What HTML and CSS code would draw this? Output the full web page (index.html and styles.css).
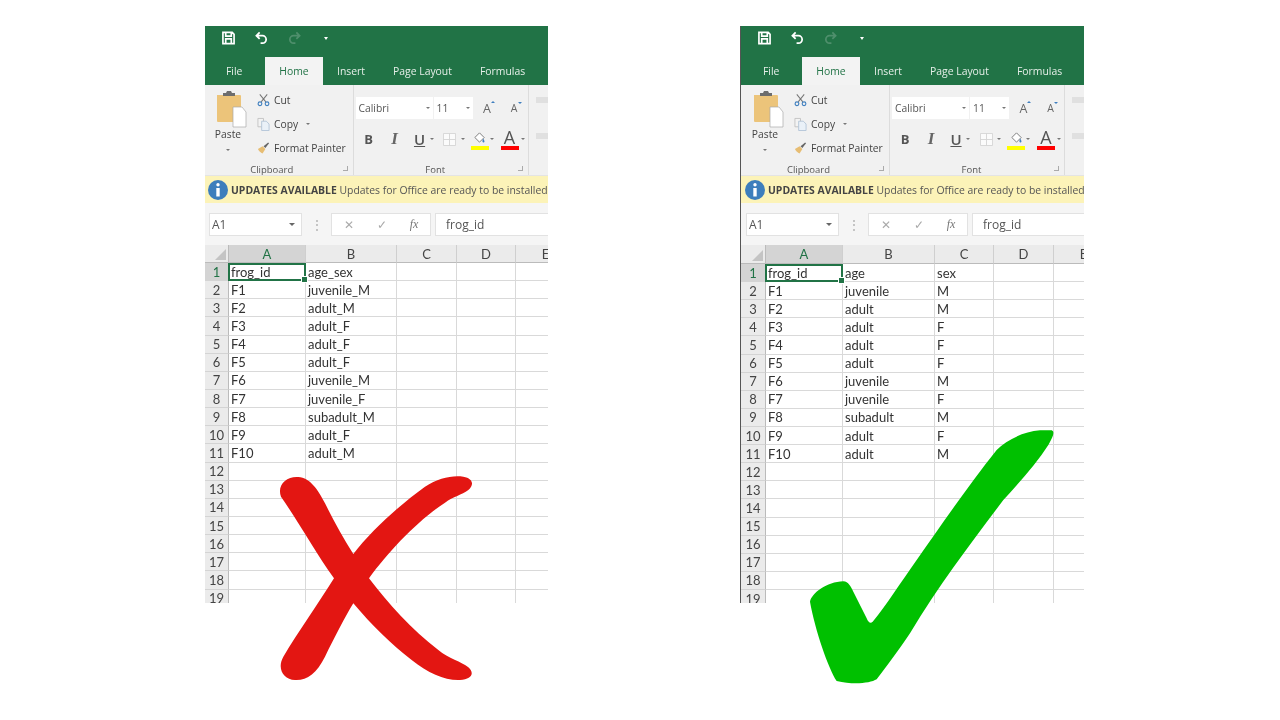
FILE: index.html
```html
<!DOCTYPE html>
<html lang="en">
<head>
  <meta charset="UTF-8" />
  <title>Tidy data in Excel</title>
  <link rel="stylesheet" href="styles.css">
</head>
<body>

  <svg class="defs" width="0" height="0">
    <symbol id="i-save" viewBox="0 0 14 14"><path d="M1 1h10l2 2v10H1z M4 1v4h6V1 M4 13V8h6v5" fill="none" stroke="#fff" stroke-width="1.8"/></symbol>
    <symbol id="i-undo" viewBox="0 0 14 14"><path d="M5 1L1.5 4.5 5 8 M2 4.5h6a4 4 0 0 1 0 8H6" fill="none" stroke="currentColor" stroke-width="1.9"/></symbol>
    <symbol id="i-paste" viewBox="0 0 32 38"><path d="M2 5h23a1 1 0 0 1 1 1v26H3a1 1 0 0 1-1-1z" fill="#ecc47a"/><path d="M8 6V3h3l1-2h4l1 2h3v3z" fill="#6d6d6d"/><path d="M18 17h9l4 5v15H18z" fill="#fff" stroke="#aaa" stroke-width=".7"/></symbol>
    <symbol id="i-cut" viewBox="0 0 14 14"><path d="M3 1l6.5 8 M11 1L4.5 9" fill="none" stroke="#777" stroke-width="1.1"/><circle cx="3.2" cy="11" r="2" fill="none" stroke="#3f7fbf" stroke-width="1.2"/><circle cx="10.8" cy="11" r="2" fill="none" stroke="#3f7fbf" stroke-width="1.2"/></symbol>
    <symbol id="i-copy" viewBox="0 0 14 14"><path d="M1 1h6v9H1z" fill="#f3f3f3" stroke="#c2c2c2"/><path d="M5 4h5l3 3v7H5z" fill="#eaf1f8" stroke="#b4c6d8"/></symbol>
    <symbol id="i-brush" viewBox="0 0 14 14"><path d="M1 8l5-3 3 3-3 5C4 12 2 10 1 8z" fill="#e7bd73"/><path d="M7 5l5-4 1 1-4 5z" fill="#666"/></symbol>
    <symbol id="i-borders" viewBox="0 0 14 14"><path d="M.5.5h13v13H.5z M7 .5v13 M.5 7h13" fill="#fbfbfb" stroke="#d5d5d5"/></symbol>
    <symbol id="i-fill" viewBox="0 0 14 14"><path d="M2 7l5-5 5 5-5 5z" fill="#fff" stroke="#777"/><path d="M11 8c1 2 2 3 1 4s-3 0-1-4z" fill="#3f7fbf"/></symbol>
    <symbol id="i-info" viewBox="0 0 20 20"><circle cx="10" cy="10" r="10" fill="#3d7ebc"/><circle cx="10" cy="4.8" r="1.7" fill="#fff"/><path d="M8.3 8h3.4v8.5H8.3z" fill="#fff"/></symbol>
  </svg>

  <main class="slide">

    <!-- Untidy version: one column for age and sex -->
    <section class="sheet sheet-left">
      <div class="qat">
        <svg class="qat-icon"><use href="#i-save"/></svg>
        <svg class="qat-icon undo"><use href="#i-undo"/></svg>
        <svg class="qat-icon redo"><use href="#i-undo"/></svg>
        <span class="qat-more"></span>
      </div>
      <nav class="tabs">
        <span class="tab tab-file">File</span>
        <span class="tab tab-home">Home</span>
        <span class="tab tab-insert">Insert</span>
        <span class="tab tab-layout">Page Layout</span>
        <span class="tab">Formulas</span>
      </nav>
      <div class="ribbon">
        <div class="group group-clip">
          <div class="group-body clip-body">
            <div class="paste">
              <svg class="paste-icon"><use href="#i-paste"/></svg>
              <span>Paste</span>
              <span class="tiny-caret"></span>
            </div>
            <div class="clip-tools">
              <div class="clip-row"><svg class="tool-icon"><use href="#i-cut"/></svg>Cut</div>
              <div class="clip-row"><svg class="tool-icon"><use href="#i-copy"/></svg>Copy<span class="tiny-caret caret-copy"></span></div>
              <div class="clip-row"><svg class="tool-icon"><use href="#i-brush"/></svg>Format Painter</div>
            </div>
          </div>
          <div class="group-label label-clip">Clipboard</div>
        </div>
        <div class="group group-font">
          <div class="group-body font-body">
            <div class="font-row">
              <span class="combo combo-name">Calibri<i class="tiny-caret"></i></span>
              <span class="combo combo-size">11<i class="tiny-caret"></i></span>
              <span class="grow-a">A</span>
              <span class="grow-a shrink-a">A</span>
            </div>
            <div class="format-row">
              <span class="fmt fmt-b">B</span>
              <span class="fmt fmt-i">I</span>
              <span class="fmt fmt-u drop">U</span>
              <span class="fmt fmt-wide drop"><svg class="fmt-icon"><use href="#i-borders"/></svg></span>
              <span class="fmt fmt-fill drop"><svg class="fmt-icon"><use href="#i-fill"/></svg></span>
              <span class="fmt fmt-wide fmt-color drop">A</span>
            </div>
          </div>
          <div class="group-label label-font">Font</div>
        </div>
        <div class="group-next"><span></span><span></span></div>
      </div>
      <div class="notice">
        <svg class="info"><use href="#i-info"/></svg>
        <span class="notice-text"><b>UPDATES AVAILABLE</b> Updates for Office are ready to be installed</span>
      </div>
      <div class="formula">
        <span class="name-box">A1<i class="tiny-caret"></i></span>
        <span class="dots">⋮</span>
        <span class="fx-box"><em>✕</em><em>✓</em><em class="fx">fx</em></span>
        <span class="formula-input">frog_id</span>
      </div>
      <div class="grid">
        <div class="corner"></div><div class="col col-on">A</div><div class="col">B</div><div class="col">C</div><div class="col">D</div><div class="col">E</div>
        <div class="row row-on">1</div><div class="cell cell-on">frog_id</div><div class="cell">age_sex</div><div class="cell"></div><div class="cell"></div><div class="cell"></div>
        <div class="row">2</div><div class="cell">F1</div><div class="cell">juvenile_M</div><div class="cell"></div><div class="cell"></div><div class="cell"></div>
        <div class="row">3</div><div class="cell">F2</div><div class="cell">adult_M</div><div class="cell"></div><div class="cell"></div><div class="cell"></div>
        <div class="row">4</div><div class="cell">F3</div><div class="cell">adult_F</div><div class="cell"></div><div class="cell"></div><div class="cell"></div>
        <div class="row">5</div><div class="cell">F4</div><div class="cell">adult_F</div><div class="cell"></div><div class="cell"></div><div class="cell"></div>
        <div class="row">6</div><div class="cell">F5</div><div class="cell">adult_F</div><div class="cell"></div><div class="cell"></div><div class="cell"></div>
        <div class="row">7</div><div class="cell">F6</div><div class="cell">juvenile_M</div><div class="cell"></div><div class="cell"></div><div class="cell"></div>
        <div class="row">8</div><div class="cell">F7</div><div class="cell">juvenile_F</div><div class="cell"></div><div class="cell"></div><div class="cell"></div>
        <div class="row">9</div><div class="cell">F8</div><div class="cell">subadult_M</div><div class="cell"></div><div class="cell"></div><div class="cell"></div>
        <div class="row">10</div><div class="cell">F9</div><div class="cell">adult_F</div><div class="cell"></div><div class="cell"></div><div class="cell"></div>
        <div class="row">11</div><div class="cell">F10</div><div class="cell">adult_M</div><div class="cell"></div><div class="cell"></div><div class="cell"></div>
        <div class="row">12</div><div class="cell"></div><div class="cell"></div><div class="cell"></div><div class="cell"></div><div class="cell"></div>
        <div class="row">13</div><div class="cell"></div><div class="cell"></div><div class="cell"></div><div class="cell"></div><div class="cell"></div>
        <div class="row">14</div><div class="cell"></div><div class="cell"></div><div class="cell"></div><div class="cell"></div><div class="cell"></div>
        <div class="row">15</div><div class="cell"></div><div class="cell"></div><div class="cell"></div><div class="cell"></div><div class="cell"></div>
        <div class="row">16</div><div class="cell"></div><div class="cell"></div><div class="cell"></div><div class="cell"></div><div class="cell"></div>
        <div class="row">17</div><div class="cell"></div><div class="cell"></div><div class="cell"></div><div class="cell"></div><div class="cell"></div>
        <div class="row">18</div><div class="cell"></div><div class="cell"></div><div class="cell"></div><div class="cell"></div><div class="cell"></div>
        <div class="row">19</div><div class="cell"></div><div class="cell"></div><div class="cell"></div><div class="cell"></div><div class="cell"></div>
      </div>
    </section>

    <!-- Tidy version: age and sex split -->
    <section class="sheet sheet-right">
      <div class="qat">
        <svg class="qat-icon"><use href="#i-save"/></svg>
        <svg class="qat-icon undo"><use href="#i-undo"/></svg>
        <svg class="qat-icon redo"><use href="#i-undo"/></svg>
        <span class="qat-more"></span>
      </div>
      <nav class="tabs">
        <span class="tab tab-file">File</span>
        <span class="tab tab-home">Home</span>
        <span class="tab tab-insert">Insert</span>
        <span class="tab tab-layout">Page Layout</span>
        <span class="tab">Formulas</span>
      </nav>
      <div class="ribbon">
        <div class="group group-clip">
          <div class="group-body clip-body">
            <div class="paste">
              <svg class="paste-icon"><use href="#i-paste"/></svg>
              <span>Paste</span>
              <span class="tiny-caret"></span>
            </div>
            <div class="clip-tools">
              <div class="clip-row"><svg class="tool-icon"><use href="#i-cut"/></svg>Cut</div>
              <div class="clip-row"><svg class="tool-icon"><use href="#i-copy"/></svg>Copy<span class="tiny-caret caret-copy"></span></div>
              <div class="clip-row"><svg class="tool-icon"><use href="#i-brush"/></svg>Format Painter</div>
            </div>
          </div>
          <div class="group-label label-clip">Clipboard</div>
        </div>
        <div class="group group-font">
          <div class="group-body font-body">
            <div class="font-row">
              <span class="combo combo-name">Calibri<i class="tiny-caret"></i></span>
              <span class="combo combo-size">11<i class="tiny-caret"></i></span>
              <span class="grow-a">A</span>
              <span class="grow-a shrink-a">A</span>
            </div>
            <div class="format-row">
              <span class="fmt fmt-b">B</span>
              <span class="fmt fmt-i">I</span>
              <span class="fmt fmt-u drop">U</span>
              <span class="fmt fmt-wide drop"><svg class="fmt-icon"><use href="#i-borders"/></svg></span>
              <span class="fmt fmt-fill drop"><svg class="fmt-icon"><use href="#i-fill"/></svg></span>
              <span class="fmt fmt-wide fmt-color drop">A</span>
            </div>
          </div>
          <div class="group-label label-font">Font</div>
        </div>
        <div class="group-next"><span></span><span></span></div>
      </div>
      <div class="notice">
        <svg class="info"><use href="#i-info"/></svg>
        <span class="notice-text"><b>UPDATES AVAILABLE</b> Updates for Office are ready to be installed</span>
      </div>
      <div class="formula">
        <span class="name-box">A1<i class="tiny-caret"></i></span>
        <span class="dots">⋮</span>
        <span class="fx-box"><em>✕</em><em>✓</em><em class="fx">fx</em></span>
        <span class="formula-input">frog_id</span>
      </div>
      <div class="grid">
        <div class="corner"></div><div class="col col-on">A</div><div class="col">B</div><div class="col">C</div><div class="col">D</div><div class="col">E</div>
        <div class="row row-on">1</div><div class="cell cell-on">frog_id</div><div class="cell">age</div><div class="cell">sex</div><div class="cell"></div><div class="cell"></div>
        <div class="row">2</div><div class="cell">F1</div><div class="cell">juvenile</div><div class="cell">M</div><div class="cell"></div><div class="cell"></div>
        <div class="row">3</div><div class="cell">F2</div><div class="cell">adult</div><div class="cell">M</div><div class="cell"></div><div class="cell"></div>
        <div class="row">4</div><div class="cell">F3</div><div class="cell">adult</div><div class="cell">F</div><div class="cell"></div><div class="cell"></div>
        <div class="row">5</div><div class="cell">F4</div><div class="cell">adult</div><div class="cell">F</div><div class="cell"></div><div class="cell"></div>
        <div class="row">6</div><div class="cell">F5</div><div class="cell">adult</div><div class="cell">F</div><div class="cell"></div><div class="cell"></div>
        <div class="row">7</div><div class="cell">F6</div><div class="cell">juvenile</div><div class="cell">M</div><div class="cell"></div><div class="cell"></div>
        <div class="row">8</div><div class="cell">F7</div><div class="cell">juvenile</div><div class="cell">F</div><div class="cell"></div><div class="cell"></div>
        <div class="row">9</div><div class="cell">F8</div><div class="cell">subadult</div><div class="cell">M</div><div class="cell"></div><div class="cell"></div>
        <div class="row">10</div><div class="cell">F9</div><div class="cell">adult</div><div class="cell">F</div><div class="cell"></div><div class="cell"></div>
        <div class="row">11</div><div class="cell">F10</div><div class="cell">adult</div><div class="cell">M</div><div class="cell"></div><div class="cell"></div>
        <div class="row">12</div><div class="cell"></div><div class="cell"></div><div class="cell"></div><div class="cell"></div><div class="cell"></div>
        <div class="row">13</div><div class="cell"></div><div class="cell"></div><div class="cell"></div><div class="cell"></div><div class="cell"></div>
        <div class="row">14</div><div class="cell"></div><div class="cell"></div><div class="cell"></div><div class="cell"></div><div class="cell"></div>
        <div class="row">15</div><div class="cell"></div><div class="cell"></div><div class="cell"></div><div class="cell"></div><div class="cell"></div>
        <div class="row">16</div><div class="cell"></div><div class="cell"></div><div class="cell"></div><div class="cell"></div><div class="cell"></div>
        <div class="row">17</div><div class="cell"></div><div class="cell"></div><div class="cell"></div><div class="cell"></div><div class="cell"></div>
        <div class="row">18</div><div class="cell"></div><div class="cell"></div><div class="cell"></div><div class="cell"></div><div class="cell"></div>
        <div class="row">19</div><div class="cell"></div><div class="cell"></div><div class="cell"></div><div class="cell"></div><div class="cell"></div>
      </div>
    </section>

    <!-- Hand drawn marks over the sheets -->
    <svg class="mark mark-cross" viewBox="0 0 1035 780">
      <path fill="#e31612" d="M228 170C215 135 245 108 280 111C315 113 340 150 360 190C385 240 415 295 445 342C500 270 590 190 660 140C700 115 740 105 775 110C805 115 808 135 790 150C770 165 745 170 720 188C640 240 550 335 492 415C550 490 620 570 700 630C730 655 770 665 790 682C810 700 800 718 765 720C720 722 670 700 620 660C560 615 500 555 445 490C420 530 390 590 360 650C335 700 305 722 270 720C235 718 215 685 235 650C280 575 340 490 387 415C330 335 280 245 228 170Z"/>
    </svg>
    <svg class="mark mark-check" viewBox="0 0 1035 825">
      <path fill="#00c000" d="M210 545C215 520 260 485 310 484C325 485 333 500 340 515L380 595C385 608 392 612 398 605C440 555 480 490 530 420C600 320 690 190 770 90C800 60 850 35 900 31L935 31C945 35 940 50 925 75C890 130 840 185 790 240C700 360 600 490 510 640C480 685 440 740 410 778C390 790 340 795 290 783C265 745 225 630 210 545Z"/>
    </svg>
  </main>

</body>
</html>
```

FILE: styles.css
```css
* {
  box-sizing: border-box;
}

body {
  margin: 0;
  background-color: #fff;
  font-family: "Open Sans", "Noto Sans", sans-serif;
  color: #444;
}

.defs {
  display: block;
  height: 0;
}

.slide {
  position: relative;
  display: flex;
  gap: 192px;
  width: 1280px;
  height: 720px;
  padding: 26px 0 0 205px;
  overflow: hidden;
}

.sheet {
  display: flex;
  flex-direction: column;
  width: 343px;
  height: 577px;
  overflow: hidden;
  background-color: #f3f3f3;
  filter: blur(0.3px);
}

.sheet > * {
  flex: none;
}

.sheet-right {
  width: 344px;
  border-left: 1px solid #555;
}

.sheet-right .tabs,
.sheet-right .ribbon,
.sheet-right .notice,
.sheet-right .formula {
  padding-left: 1px;
}

/* title bar */
.qat {
  display: flex;
  align-items: center;
  height: 31px;
  padding: 0 0 7px 17px;
  gap: 20px;
  background-color: #217346;
  color: #fff;
}

.qat-icon {
  width: 13px;
  height: 14px;
}

.redo {
  color: #4f8f6c;
  transform: scaleX(-1);
}

.qat-more {
  width: 0;
  height: 0;
  margin-left: 3px;
  border: 2px solid transparent;
  border-top: 3px solid #fff;
  border-bottom: 0;
}

.tabs {
  display: flex;
  align-items: center;
  height: 28px;
  background-color: #217346;
  color: #e6efe9;
  font-size: 10.4px;
}

.tab-file {
  width: 60px;
  padding-left: 21px;
}

.tab-home {
  align-self: stretch;
  display: flex;
  align-items: center;
  justify-content: center;
  width: 58px;
  background-color: #f3f3f3;
  color: #217346;
}

.tab-insert {
  margin-left: 14px;
  margin-right: 28px;
}

.tab-layout {
  margin-right: 28px;
}

/* ribbon */
.ribbon {
  display: flex;
  height: 91px;
  border-bottom: 1px solid #e4e4e4;
  background-color: #f1f1f1;
  font-size: 10.3px;
}

.group {
  display: flex;
  flex-direction: column;
  border-right: 1px solid #dcdcdc;
}

.group-clip {
  width: 149px;
}

.group-font {
  width: 176px;
}

.group-body {
  flex: 1;
}

.group-label {
  position: relative;
  height: 16px;
  text-align: center;
  font-size: 9.5px;
  line-height: 21px;
  color: #555;
}

/* little dialog launcher in the group corner */
.group-label::after {
  content: "";
  position: absolute;
  right: 5px;
  top: 7px;
  width: 4px;
  height: 4px;
  border-right: 1px solid #aaa;
  border-bottom: 1px solid #aaa;
}

.label-clip {
  padding-right: 14px;
}

.label-font {
  padding-right: 11px;
}

.clip-body {
  display: flex;
}

.paste {
  display: flex;
  flex-direction: column;
  align-items: center;
  width: 46px;
  padding-top: 5px;
  color: #444;
}

.paste-icon {
  width: 32px;
  height: 38px;
  margin: 0 0 -1px 6px;
}

.tiny-caret {
  display: inline-block;
  width: 0;
  height: 0;
  border: 2px solid transparent;
  border-top: 2px solid #777;
  border-bottom: 0;
}

.paste .tiny-caret {
  margin-top: 8px;
}

.clip-tools {
  display: flex;
  flex-direction: column;
  gap: 6px;
  padding: 6px 0 0 6px;
}

.clip-row {
  display: flex;
  align-items: center;
  gap: 4px;
  height: 18px;
  white-space: nowrap;
}

.tool-icon {
  width: 13px;
  height: 14px;
}

.caret-copy {
  margin-left: 4px;
}

.font-body {
  padding: 12px 0 0 2px;
}

.font-row {
  display: flex;
  align-items: center;
  height: 22px;
}

.combo {
  display: flex;
  align-items: center;
  justify-content: space-between;
  height: 22px;
  padding: 0 3px;
  background-color: #fff;
  color: #555;
}

.combo-name {
  width: 77px;
  margin-right: 1px;
}

.combo-size {
  width: 39px;
  margin-right: 1px;
}

.grow-a {
  position: relative;
  width: 27px;
  text-align: center;
  font-size: 12.5px;
  color: #666;
}

.grow-a::after {
  content: "";
  position: absolute;
  right: 6px;
  top: 1px;
  border: 2px solid transparent;
  border-bottom: 2px solid #3f7fbf;
  border-top: 0;
}

.shrink-a {
  font-size: 10.5px;
}

.shrink-a::after {
  border: 2px solid transparent;
  border-top: 2px solid #3f7fbf;
  border-bottom: 0;
}

.format-row {
  display: flex;
  align-items: center;
  height: 22px;
  margin-top: 9px;
  color: #555;
}

.fmt {
  position: relative;
  display: flex;
  align-items: center;
  justify-content: center;
  width: 26px;
  height: 22px;
}

/* dropdown dot after the format buttons */
.drop::after {
  content: "";
  position: absolute;
  right: -2px;
  top: 10px;
  border: 2px solid transparent;
  border-top: 2px solid #777;
  border-bottom: 0;
}

.fmt-b {
  font-size: 13px;
  font-weight: 700;
}

.fmt-i {
  font-family: "Liberation Serif", serif;
  font-size: 17px;
  font-style: italic;
  font-weight: 700;
  color: #666;
}

.fmt-u {
  width: 24px;
  font-size: 15px;
  font-weight: 600;
  text-decoration: underline;
}

.fmt-wide {
  width: 36px;
}

.fmt-wide.drop::after {
  right: 3px;
}

.fmt-fill {
  width: 18px;
  margin: 0 3px;
  border-bottom: 4px solid #ffff00;
}

.fmt-fill.drop::after {
  right: -5px;
}

.fmt-color {
  width: 18px;
  height: 22px;
  margin: 0 9px;
  border-bottom: 4px solid #ff0000;
  font-size: 18px;
  line-height: 16px;
}

.fmt-color.drop::after {
  right: -6px;
}

.fmt-icon {
  width: 13px;
  height: 13px;
}

.group-next {
  display: flex;
  flex-direction: column;
  gap: 30px;
  padding: 12px 0 0 7px;
}

.group-next span {
  width: 12px;
  height: 6px;
  background-color: #e0e0e0;
}

/* yellow notice */
.notice {
  display: flex;
  align-items: center;
  gap: 3px;
  height: 27px;
  background-color: #fcf3b8;
  font-size: 10.4px;
  white-space: nowrap;
  color: #555;
}

.info {
  flex: none;
  width: 20px;
  height: 20px;
  margin-left: 3px;
}

.notice b {
  color: #444;
}

/* formula bar */
.formula {
  display: flex;
  align-items: center;
  height: 42px;
  background-color: #f5f5f5;
  font-size: 12px;
  color: #555;
}

.name-box {
  display: flex;
  align-items: center;
  justify-content: space-between;
  flex: none;
  width: 93px;
  height: 23px;
  margin-left: 4px;
  padding: 0 6px 0 2px;
  border: 1px solid #e2e2e2;
  background-color: #fff;
}

.name-box .tiny-caret {
  border-width: 3px;
  border-top-color: #666;
}

.dots {
  flex: none;
  width: 29px;
  text-align: center;
  color: #aaa;
}

.fx-box {
  display: flex;
  justify-content: space-around;
  align-items: center;
  flex: none;
  width: 100px;
  height: 23px;
  margin-right: 4px;
  border: 1px solid #e2e2e2;
  background-color: #fff;
}

.fx-box em {
  font-style: normal;
  color: #aaa;
}

.fx-box .fx {
  font-family: "Liberation Serif", serif;
  font-style: italic;
  color: #777;
}

.formula-input {
  flex: 1;
  height: 23px;
  padding-left: 10px;
  border: 1px solid #e2e2e2;
  border-right: 0;
  background-color: #fff;
  line-height: 21px;
  white-space: nowrap;
}

/* spreadsheet */
.grid {
  display: grid;
  height: 358px;
  align-content: start;
  background-color: #fff;
  font-family: Lato, "Open Sans", sans-serif;
  font-size: 13px;
  color: #333;
}

.sheet-left .grid {
  grid-template-columns: 24px 77px 91px 60px 59px 60px;
  grid-template-rows: 18px repeat(19, 18.15px);
}

.sheet-right .grid {
  grid-template-columns: 25px 77px 92px 59px 60px 60px;
  grid-template-rows: 19px repeat(19, 18.12px);
}

.corner,
.col,
.row {
  background-color: #ebebeb;
  color: #444;
}

.corner {
  position: relative;
  border-right: 1px solid #bbb;
  border-bottom: 1px solid #bbb;
}

.corner::after {
  content: "";
  position: absolute;
  right: 2px;
  bottom: 2px;
  border-style: solid;
  border-width: 0 0 11px 11px;
  border-color: transparent transparent #c4c4c4 transparent;
}

.col {
  display: flex;
  align-items: center;
  justify-content: center;
  border-right: 1px solid #cfcfcf;
  border-bottom: 1px solid #bbb;
}

.col-on {
  background-color: #d4d4d4;
  color: #217346;
}

.row {
  display: flex;
  align-items: center;
  justify-content: center;
  border-right: 1px solid #bbb;
  border-bottom: 1px solid #d4d4d4;
}

.row-on {
  background-color: #d4d4d4;
  color: #217346;
}

.cell {
  display: flex;
  align-items: center;
  padding-left: 2px;
  border-right: 1px solid #d9d9d9;
  border-bottom: 1px solid #d9d9d9;
  white-space: nowrap;
}

.cell-on {
  position: relative;
  border: 2px solid #217346;
  padding-left: 1px;
  margin-left: -1px;
}

.cell-on::after {
  content: "";
  position: absolute;
  right: -4px;
  bottom: -4px;
  width: 5px;
  height: 5px;
  border: 1px solid #fff;
  background-color: #217346;
}

/* marks sit on top of the sheets */
.mark {
  position: absolute;
  width: 345px;
}

.mark-cross {
  left: 205px;
  top: 440px;
  height: 260px;
}

.mark-check {
  left: 740px;
  top: 420px;
  height: 275px;
}
```
